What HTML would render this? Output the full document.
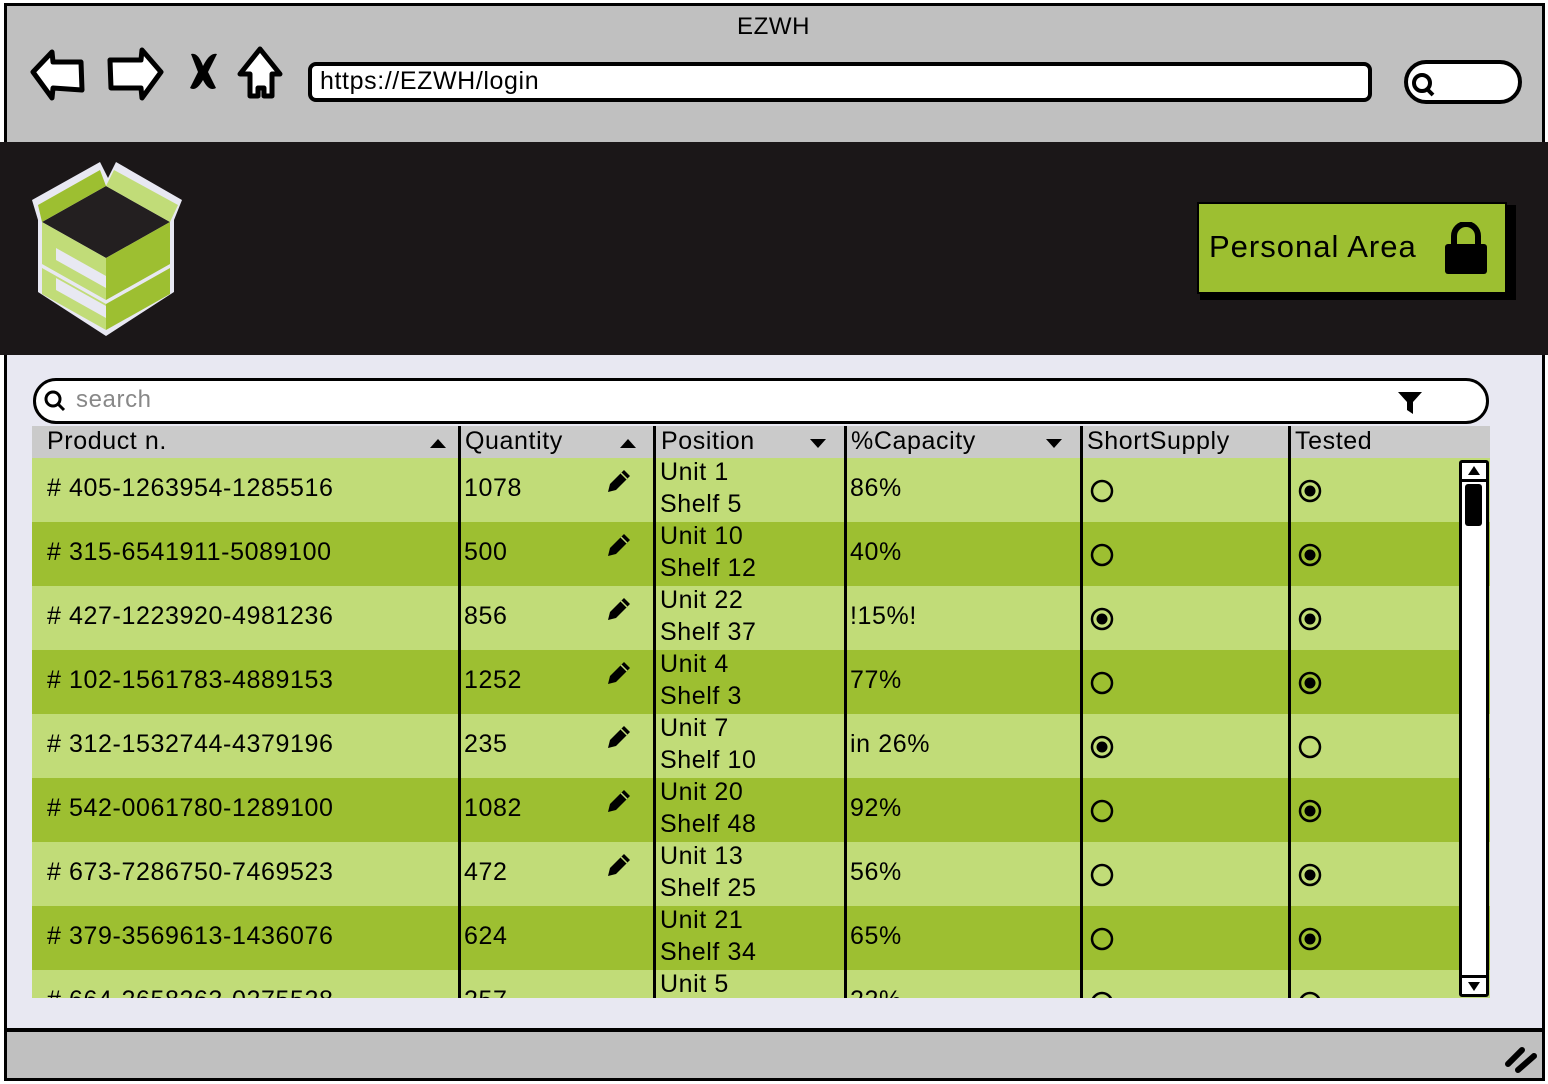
<!DOCTYPE html>
<html><head><meta charset="utf-8"><style>
*{margin:0;padding:0;box-sizing:border-box}
body{width:1548px;height:1084px;background:#fff;position:relative;overflow:hidden;font-family:"Liberation Sans","DejaVu Sans",sans-serif;color:#000}
.a{position:absolute}
.t{position:absolute;font-size:25px;line-height:30px;white-space:nowrap;letter-spacing:0.6px}
</style></head><body>
<div class="a" style="left:4px;top:3px;width:1541px;height:1078px;border:3px solid #000;background:#e8e8f2"></div>
<div class="a" style="left:7px;top:6px;width:1535px;height:136px;background:#c0c0c0"></div>
<div class="t" style="left:737px;top:12px;font-size:24px">EZWH</div>
<svg class="a" style="left:28px;top:44px" width="260" height="60" viewBox="0 0 260 60">
<path d="M5 28 L24 8 L25 18 L53 18 L54 46 L25 44 L24 54 Z" fill="#fff" stroke="#000" stroke-width="5" stroke-linejoin="round"/>
<path d="M133 28 L114 6 L113 16 L82 16 L83 44 L113 44 L114 54 Z" fill="#fff" stroke="#000" stroke-width="5" stroke-linejoin="round"/>
<path d="M163 10 Q170 8 175 22 Q182 8 189 10 L180 28 L188 44 Q181 48 175 36 Q168 48 162 44 L170 28 Z" fill="#000"/>
<path d="M232 5 L252 30 L244 30 L244 52 L236 52 L236 44 L230 44 L230 52 L222 52 L222 30 L212 30 Z" fill="#fff" stroke="#000" stroke-width="5" stroke-linejoin="round"/>
</svg>
<div class="a" style="left:308px;top:62px;width:1064px;height:40px;border:4px solid #000;border-radius:8px;background:#fff"></div>
<div class="t" style="left:320px;top:66px;font-size:25px">https://EZWH/login</div>
<div class="a" style="left:1404px;top:60px;width:118px;height:44px;border:4px solid #000;border-radius:22px;background:#fff"></div>
<svg class="a" style="left:1408px;top:70px" width="30" height="30"><circle cx="14" cy="13" r="8" fill="none" stroke="#000" stroke-width="4"/><path d="M19 19 L25 25" stroke="#000" stroke-width="4"/></svg>
<div class="a" style="left:0;top:142px;width:1548px;height:213px;background:#1b1718"></div>
<svg class="a" style="left:28px;top:160px" width="160" height="180" viewBox="0 0 160 180">
<path d="M4 40 L72 2 L80 18 L88 2 L154 40 L146 60 L146 132 L78 176 L10 132 L10 60 Z" fill="#e8e8f2"/>
<path d="M14 62 L78 26 L142 62 L78 98 Z" fill="#231f20"/>
<path d="M14 62 L78 98 L78 140 L14 104 Z" fill="#c1dc78"/>
<path d="M142 62 L78 98 L78 140 L142 104 Z" fill="#9dbf31"/>
<path d="M14 62 L10 45 L72 10 L78 26 Z" fill="#9dbf31"/>
<path d="M142 62 L150 45 L86 10 L78 26 Z" fill="#c1dc78"/>
<path d="M28 88 L78 116 L78 128 L28 100 Z" fill="#e8e8f2"/>
<path d="M14 108 L78 144 L78 170 L14 134 Z" fill="#c1dc78"/>
<path d="M142 108 L78 144 L78 170 L142 134 Z" fill="#9dbf31"/>
<path d="M28 118 L78 146 L78 158 L28 130 Z" fill="#e8e8f2"/>
</svg>
<div class="a" style="left:1200px;top:205px;width:316px;height:95px;background:#000"></div>
<div class="a" style="left:1197px;top:202px;width:310px;height:92px;background:#9dbf31;border:2px solid #000"></div>
<div class="t" style="left:1209px;top:232px;font-size:31px;letter-spacing:1px">Personal Area</div>
<svg class="a" style="left:1444px;top:222px" width="44" height="52"><path d="M10 22 V14 A12 12 0 0 1 34 14 V22" fill="none" stroke="#000" stroke-width="6"/><rect x="1" y="22" width="42" height="30" rx="3" fill="#000"/></svg>
<div class="a" style="left:33px;top:378px;width:1456px;height:46px;border:3px solid #000;border-radius:23px;background:#fff"></div>
<svg class="a" style="left:42px;top:388px" width="26" height="26"><circle cx="11" cy="11" r="7" fill="none" stroke="#000" stroke-width="3"/><path d="M16 16 L22 22" stroke="#000" stroke-width="3"/></svg>
<div class="t" style="left:76px;top:385px;color:#888;font-size:24px">search</div>
<svg class="a" style="left:1396px;top:390px" width="28" height="26"><path d="M2 2 H26 L17 12 V24 L11 20 V12 Z" fill="#000"/></svg>
<div class="a" style="left:32px;top:426px;width:1458px;height:32px;background:#cacaca"></div>
<div class="a" style="left:32px;top:458px;width:1458px;height:540px;overflow:hidden" id="rows"></div>
<div class="t" style="left:47px;top:426px">Product n.</div>
<div class="t" style="left:465px;top:426px">Quantity</div>
<div class="t" style="left:661px;top:426px">Position</div>
<div class="t" style="left:851px;top:426px">%Capacity</div>
<div class="t" style="left:1087px;top:426px">ShortSupply</div>
<div class="t" style="left:1295px;top:426px">Tested</div>
<svg class="a" style="left:0;top:426px" width="1548" height="30">
<path d="M430 22 L438 13 L446 22 Z M620 22 L628 13 L636 22 Z"/>
<path d="M810 13 L818 22 L826 13 Z M1046 13 L1054 22 L1062 13 Z"/>
</svg>
<div class="a" style="left:458px;top:426px;width:3px;height:572px;background:#000"></div>
<div class="a" style="left:653px;top:426px;width:3px;height:572px;background:#000"></div>
<div class="a" style="left:844px;top:426px;width:3px;height:572px;background:#000"></div>
<div class="a" style="left:1080px;top:426px;width:3px;height:572px;background:#000"></div>
<div class="a" style="left:1288px;top:426px;width:3px;height:572px;background:#000"></div>
<div class="a" style="left:1459px;top:460px;width:30px;height:537px;background:#fff;border:3px solid #000;border-radius:3px"></div>
<div class="a" style="left:1459px;top:460px;width:30px;height:22px;border-bottom:3px solid #000"></div>
<svg class="a" style="left:1466px;top:463px" width="16" height="14"><path d="M2 12 L8 3 L14 12 Z"/></svg>
<div class="a" style="left:1465px;top:484px;width:17px;height:42px;background:#000;border-radius:3px"></div>
<div class="a" style="left:1459px;top:975px;width:30px;height:22px;border-top:3px solid #000"></div>
<svg class="a" style="left:1466px;top:979px" width="16" height="14"><path d="M2 3 L8 12 L14 3 Z"/></svg>
<div class="a" style="left:7px;top:1028px;width:1535px;height:50px;background:#c0c0c0;border-top:4px solid #000"></div>
<svg class="a" style="left:1504px;top:1044px" width="34" height="30"><path d="M4 20 L18 6 M14 26 L30 12" stroke="#000" stroke-width="6" stroke-linecap="round"/></svg>
<script>
var d=[["405-1263954-1285516","1078","1","5","86%",0,1,1],["315-6541911-5089100","500","10","12","40%",0,1,1],["427-1223920-4981236","856","22","37","!15%!",1,1,1],["102-1561783-4889153","1252","4","3","77%",0,1,1],["312-1532744-4379196","235","7","10","in 26%",1,0,1],["542-0061780-1289100","1082","20","48","92%",0,1,1],["673-7286750-7469523","472","13","25","56%",0,1,1],["379-3569613-1436076","624","21","34","65%",0,1,0],["664-2658263-0275528","257","5","","22%",0,0,0]];
var h="";
function rad(x,y,on){return '<svg class="a" style="left:'+x+'px;top:'+y+'px" width="26" height="26"><circle cx="13" cy="13" r="10" fill="none" stroke="#000" stroke-width="2.5"/>'+(on?'<circle cx="13" cy="13" r="5.5"/>':'')+'</svg>';}
d.forEach(function(r,i){var y=i*64;
h+='<div class="a" style="left:0;top:'+y+'px;width:1458px;height:64px;background:'+(i%2?'#9dbf31':'#c1dc78')+'"></div>';
h+='<div class="t" style="left:15px;top:'+(y+15)+'px">#&nbsp;'+r[0]+'</div>';
h+='<div class="t" style="left:432px;top:'+(y+15)+'px">'+r[1]+'</div>';
h+='<div class="t" style="left:628px;top:'+(y-1)+'px">Unit '+r[2]+'</div>';
if(r[3])h+='<div class="t" style="left:628px;top:'+(y+31)+'px">Shelf '+r[3]+'</div>';
h+='<div class="t" style="left:818px;top:'+(y+15)+'px">'+r[4]+'</div>';
h+=rad(1057,y+20,r[5])+rad(1265,y+20,r[6]);
if(r[7])h+='<svg class="a" style="left:572px;top:'+(y+8)+'px" width="30" height="30"><path d="M4 26 L6 18 L20 4 L26 10 L12 24 Z" fill="#000"/><path d="M17 7 L23 13" stroke="#c1dc78" stroke-width="1.5"/></svg>';
});
document.getElementById("rows").innerHTML=h;
</script>
</body></html>
